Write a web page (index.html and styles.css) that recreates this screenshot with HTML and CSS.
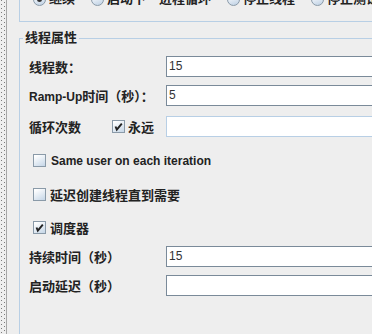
FILE: index.html
```html
<!DOCTYPE html>
<html lang="zh-CN">
<head>
<meta charset="utf-8">
<title>线程组</title>
<link rel="stylesheet" href="styles.css">
</head>
<body>
<div class="frame">
  <div class="divider">
    <svg class="dots" width="6" height="400" viewBox="0 0 6 400">
      <defs>
        <pattern id="dotpat" width="6" height="4" patternUnits="userSpaceOnUse">
          <rect x="1" y="0" width="1" height="1" fill="#7c7c7c"/>
          <rect x="4" y="2" width="1" height="1" fill="#7c7c7c"/>
        </pattern>
      </defs>
      <rect width="6" height="400" fill="url(#dotpat)"/>
    </svg>
  </div>
  <div class="content">
    <div class="policy">
      <div class="radio-row">
        <span class="radio"><span class="radio-btn on"></span><span>继续</span></span>
        <span class="radio"><span class="radio-btn"></span><span>启动下一进程循环</span></span>
        <span class="radio"><span class="radio-btn"></span><span>停止线程</span></span>
        <span class="radio"><span class="radio-btn"></span><span>停止测试</span></span>
      </div>
    </div>
    <fieldset class="props">
      <legend class="title">线程属性</legend>
      <div class="row">
        <span class="label">线程数：</span>
        <span class="field">15</span>
      </div>
      <div class="row r2">
        <span class="label"><span class="en">Ramp-Up</span>时间（秒）：</span>
        <span class="field">5</span>
      </div>
      <div class="row r3">
        <span class="label short">循环次数</span>
        <span class="inline-check"><span class="checkbox checked"><svg width="13" height="13" viewBox="0 0 13 13"><polyline points="3.5,6.5 4.8,9.6 9.8,3.6" fill="none" stroke="#222" stroke-width="1.9"/></svg></span><span>永远</span></span>
        <span class="field disabled"></span>
      </div>
      <div class="row check-row r4">
        <span class="checkbox"></span>
        <span class="en">Same user on each iteration</span>
      </div>
      <div class="row check-row r5">
        <span class="checkbox"></span>
        <span>延迟创建线程直到需要</span>
      </div>
      <div class="row check-row r6">
        <span class="checkbox checked"><svg width="13" height="13" viewBox="0 0 13 13"><polyline points="3.5,6.5 4.8,9.6 9.8,3.6" fill="none" stroke="#222" stroke-width="1.9"/></svg></span>
        <span>调度器</span>
      </div>
      <div class="row r7">
        <span class="label">持续时间（秒）</span>
        <span class="field">15</span>
      </div>
      <div class="row r8">
        <span class="label">启动延迟（秒）</span>
        <span class="field"></span>
      </div>
    </fieldset>
  </div>
</div>
</body>
</html>
```
FILE: styles.css
```css
html, body {
  margin: 0;
  padding: 0;
  background: #eeeeee;
  overflow: hidden;
}

body {
  font-family: "Liberation Sans", "Noto Sans CJK SC", sans-serif;
  font-size: 13px;
  font-weight: bold;
  color: #222222;
}

.frame {
  display: flex;
  width: 440px;
  height: 334px;
}

.divider {
  flex: none;
  width: 6px;
  border-right: 1px solid #a6a6a6;
  overflow: hidden;
}

.dots {
  display: block;
}

.content {
  flex: 1;
  padding-left: 12px;
  min-width: 0;
}

.policy {
  margin-top: -22px;
  border: 1px solid #b8cfe5;
  border-top: none;
  border-right: none;
  padding: 14px 0 15px 13px;
}

.radio-row {
  display: flex;
  gap: 16px;
  height: 14px;
  line-height: 14px;
  white-space: nowrap;
}

.radio {
  display: flex;
  align-items: center;
  gap: 3px;
}

.radio-btn {
  flex: none;
  width: 11px;
  height: 11px;
  border: 1px solid #8a9aa8;
  border-radius: 50%;
  background: linear-gradient(160deg, #ffffff 10%, #c4d5e7 90%);
  position: relative;
}

.radio-btn.on::after {
  content: "";
  position: absolute;
  left: 3px;
  top: 3px;
  width: 5px;
  height: 5px;
  border-radius: 50%;
  background: #333333;
}

.props {
  margin: 9px 0 0 0;
  padding: 11px 0 80px 0;
  border: 1px solid #b8cfe5;
  border-right: none;
  min-width: 0;
}

.title {
  margin-left: 3px;
  padding: 0 2px;
  line-height: 14px;
}

.row {
  display: flex;
  align-items: center;
  height: 21px;
  padding-left: 9px;
  white-space: nowrap;
}

.r2 { margin-top: 8px; }
.r3 { margin-top: 10px; }
.r4 { margin-top: 13px; }
.r5 { margin-top: 13px; }
.r6 { margin-top: 12px; }
.r7 { margin-top: 8px; }
.r8 { margin-top: 8px; }

.label {
  flex: none;
  width: 137px;
}

.label.short {
  width: 83px;
}

.en {
  font-size: 12px;
}

.inline-check {
  flex: none;
  width: 54px;
  display: flex;
  align-items: center;
  gap: 3px;
}

.check-row {
  padding-left: 13px;
  gap: 4px;
}

.check-row .en {
  margin-left: 1px;
}

.checkbox {
  flex: none;
  box-sizing: border-box;
  width: 13px;
  height: 13px;
  border: 1px solid #8a9aa8;
  background: linear-gradient(150deg, #ffffff 10%, #c8d8e8 95%);
  position: relative;
}

.checkbox svg {
  position: absolute;
  left: -1px;
  top: -1px;
}

.field {
  flex: 1;
  box-sizing: border-box;
  height: 21px;
  border: 1px solid #7a8a99;
  border-right: none;
  background: #ffffff;
  padding-left: 2px;
  font-size: 12px;
  font-weight: normal;
  line-height: 19px;
  color: #333333;
  box-shadow: inset 1px 1px 0 #ffffff;
}

.field.disabled {
  border-color: #b8cfe5;
}
```
